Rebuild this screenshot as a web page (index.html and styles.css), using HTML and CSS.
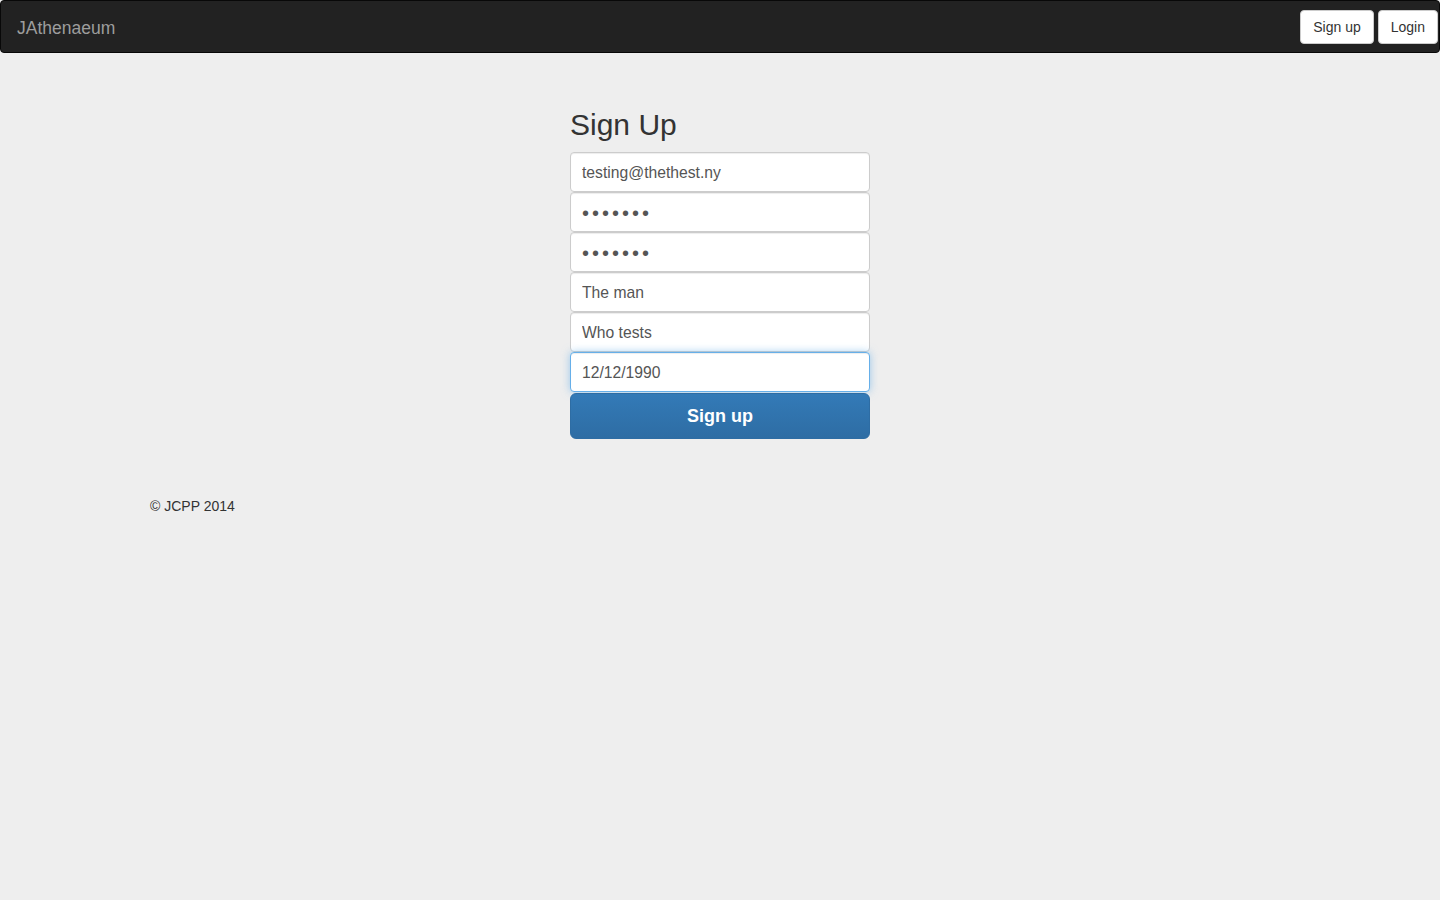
FILE: index.html
```html
<!DOCTYPE html>
<html lang="en">
<head>
    <meta charset="UTF-8">
    <title>JAthenaeum - Sign Up</title>
    <link rel="stylesheet" href="styles.css">
</head>
<body>
    <nav class="navbar">
        <a class="navbar-brand" href="#">JAthenaeum</a>
        <div class="navbar-right">
            <button class="btn-default">Sign up</button>
            <button class="btn-default">Login</button>
        </div>
    </nav>

    <div class="container">
        <form class="form-signin">
            <h2>Sign Up</h2>
            <input type="email" class="form-control" value="testing@thethest.ny" readonly>
            <input type="password" class="form-control" value="1234567" readonly>
            <input type="password" class="form-control" value="1234567" readonly>
            <input type="text" class="form-control" value="The man" readonly>
            <input type="text" class="form-control" value="Who tests" readonly>
            <input type="text" class="form-control focused" value="12/12/1990" readonly>
            <button type="button" class="btn-primary">Sign up</button>
        </form>

        <footer class="footer">
            <p>&copy; JCPP 2014</p>
        </footer>
    </div>
</body>
</html>
```

FILE: styles.css
```css
body {
    font-family: "Liberation Sans", Arial, sans-serif;
    font-size: 14px;
    margin: 0;
    background-color: #eee;
    color: #333;
}
.navbar {
    display: flex;
    align-items: center;
    justify-content: space-between;
    height: 51px;
    background: #222;
    border: 1px solid #080808;
    border-radius: 4px;
}
.navbar-brand {
    padding: 3px 16px 0;
    font-size: 17.5px;
    color: #9d9d9d;
    text-decoration: none;
}
.navbar-right {
    display: flex;
    gap: 4px;
    padding-top: 1px;
    margin-right: 1px;
}
.btn-default {
    height: 34px;
    padding: 6px 12px;
    background: #fff;
    color: #333;
    border: 1px solid #ccc;
    border-radius: 4px;
    font-family: inherit;
    font-size: 14px;
}
.container {
    width: 1140px;
    margin: 0 auto;
    padding: 0 15px;
}
.form-signin {
    width: 300px;
    margin: 0 auto;
    padding-top: 55px;
    display: flex;
    flex-direction: column;
}
.form-signin h2 {
    font-size: 30px;
    font-weight: 500;
    line-height: 33px;
    margin: 0 0 11px;
}
.form-control {
    box-sizing: border-box;
    height: 40px;
    padding: 8px 11px 6px;
    font-family: inherit;
    font-size: 15.7px;
    color: #555;
    background: #fff;
    border: 1px solid #ccc;
    border-radius: 4px;
    box-shadow: inset 0 1px 1px rgba(0,0,0,0.075);
    outline: none;
}
.form-control[type="password"] {
    font-size: 20px;
    letter-spacing: 3px;
    padding-top: 8px;
    color: #555;
}
.form-control.focused {
    border-color: #66afe9;
    box-shadow: inset 0 1px 1px rgba(0,0,0,0.075), 0 0 8px rgba(102,175,233,0.6);
}
.btn-primary {
    height: 46px;
    margin-top: 1px;
    font-family: inherit;
    font-size: 18px;
    font-weight: bold;
    color: #fff;
    background: linear-gradient(to bottom, #337ab7 0, #2e6da4 100%);
    border: 1px solid #2e6da4;
    border-radius: 6px;
}
.footer {
    padding-top: 59px;
}
.footer p {
    margin: 0;
    font-size: 14px;
    color: #333;
}
```
